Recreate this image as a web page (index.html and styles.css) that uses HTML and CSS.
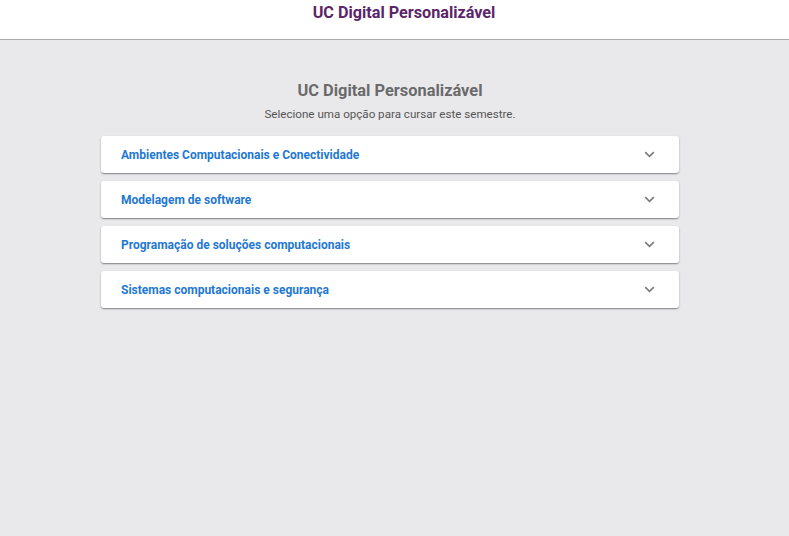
FILE: index.html
```html
<!DOCTYPE html>
<html lang="pt">
<head>
<meta charset="utf-8">
<link rel="stylesheet" href="styles.css">
</head>
<body>
<header class="topbar"><h1 class="topbar-title">UC Digital Personalizável</h1></header>
<main class="content">
  <h2 class="page-title">UC Digital Personalizável</h2>
  <p class="page-sub">Selecione uma opção para cursar este semestre.</p>
  <div class="list">
    <div class="item"><span class="item-label">Ambientes Computacionais e Conectividade</span><svg class="chev" width="11" height="7" viewBox="0 0 11 7"><path d="M1.2 1.2 L5.5 5.3 L9.8 1.2" fill="none" stroke="#7a7a7a" stroke-width="1.6"/></svg></div>
    <div class="item"><span class="item-label">Modelagem de software</span><svg class="chev" width="11" height="7" viewBox="0 0 11 7"><path d="M1.2 1.2 L5.5 5.3 L9.8 1.2" fill="none" stroke="#7a7a7a" stroke-width="1.6"/></svg></div>
    <div class="item"><span class="item-label">Programação de soluções computacionais</span><svg class="chev" width="11" height="7" viewBox="0 0 11 7"><path d="M1.2 1.2 L5.5 5.3 L9.8 1.2" fill="none" stroke="#7a7a7a" stroke-width="1.6"/></svg></div>
    <div class="item"><span class="item-label">Sistemas computacionais e segurança</span><svg class="chev" width="11" height="7" viewBox="0 0 11 7"><path d="M1.2 1.2 L5.5 5.3 L9.8 1.2" fill="none" stroke="#7a7a7a" stroke-width="1.6"/></svg></div>
  </div>
</main>
</body>
</html>
```
FILE: styles.css
```css
html, body { margin: 0; padding: 0; }
body {
  background: #e9e9ec;
  font-family: Roboto, "Liberation Sans", Arial, sans-serif;
  height: 536px;
  overflow: hidden;
}
.topbar {
  background: #fff;
  height: 39px;
  border-bottom: 1px solid #a9a9ab;
  display: flex;
  justify-content: center;
  padding-left: 19px;
}
.topbar-title {
  margin: 4px 0 0;
  font-size: 16.2px;
  font-weight: 700;
  color: #5b2569;
  line-height: 18px;
}
.content {
  width: 578px;
  margin: 0 0 0 101px;
  padding-top: 41px;
  display: flex;
  flex-direction: column;
  align-items: stretch;
}
.page-title {
  margin: 0;
  text-align: center;
  font-size: 16.4px;
  font-weight: 700;
  color: #6a6a6a;
  line-height: 19px;
}
.page-sub {
  margin: 7px 0 0;
  text-align: center;
  font-size: 11.6px;
  color: #555;
  line-height: 14px;
}
.list {
  margin-top: 15px;
  display: flex;
  flex-direction: column;
  gap: 8px;
}
.item {
  background: #fff;
  height: 37px;
  border-radius: 3px;
  box-shadow: 0 1px 2px rgba(0,0,0,0.35), 0 2px 1px -1px rgba(0,0,0,0.15);
  display: flex;
  align-items: center;
  justify-content: space-between;
  padding: 0 24px 0 20px;
}
.item-label {
  font-size: 12px;
  font-weight: 700;
  color: #1f78d1;
}
.chev { display: block; }
```
